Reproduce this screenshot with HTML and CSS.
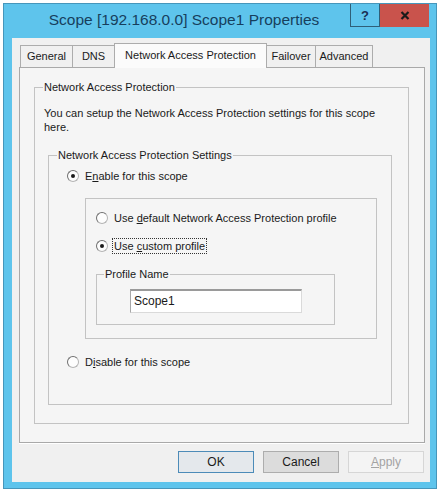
FILE: index.html
```html
<!DOCTYPE html>
<html>
<head>
<meta http-equiv="Content-Type" content="text/html; charset=utf-8"/>
<title>Scope Properties</title>
<link rel="stylesheet" href="styles.css">
</head>
<body>
<div class="window">
  <div class="titlebar">
    <div class="title">Scope [192.168.0.0] Scope1 Properties</div>
    <div class="caption-btn help">?</div>
    <div class="caption-btn close">
      <svg width="10" height="9" viewBox="0 0 10 9"><path d="M1.5 1 L8.5 8 M8.5 1 L1.5 8" stroke="#1a1a1a" stroke-width="2.2"/></svg>
    </div>
  </div>

  <div class="client">
    <div class="tabs">
      <div class="tab tab-general">General</div>
      <div class="tab tab-dns">DNS</div>
      <div class="tab tab-nap selected">Network Access Protection</div>
      <div class="tab tab-failover">Failover</div>
      <div class="tab tab-advanced">Advanced</div>
    </div>

    <div class="panel">
      <fieldset class="group outer">
        <legend>Network Access Protection</legend>
        <p class="intro">You can setup the Network Access Protection settings for this scope<br>here.</p>

        <fieldset class="group settings">
          <legend>Network Access Protection Settings</legend>
          <div class="radio-row first">
            <span class="radio checked"></span>
            <span class="label">E<u>n</u>able for this scope</span>
          </div>

          <div class="box">
            <div class="radio-row">
              <span class="radio"></span>
              <span class="label">Use <u>d</u>efault Network Access Protection profile</span>
            </div>
            <div class="radio-row second">
              <span class="radio checked"></span>
              <span class="label focused">Use <u>c</u>ustom profile</span>
            </div>
            <fieldset class="group profile">
              <legend>Profile Name</legend>
              <div class="textbox">Scope1</div>
            </fieldset>
          </div>

          <div class="radio-row last">
            <span class="radio"></span>
            <span class="label">D<u>i</u>sable for this scope</span>
          </div>
        </fieldset>
      </fieldset>
    </div>

    <div class="buttons">
      <div class="btn default">OK</div>
      <div class="btn">Cancel</div>
      <div class="btn disabled"><u>A</u>pply</div>
    </div>
  </div>
</div>
</body>
</html>
```

FILE: styles.css
```css
body {
  margin: 0;
  background-color: white;
  font-family: "Liberation Sans", Arial, sans-serif;
  font-size: 11px;
  color: #1a1a1a;
}

.window {
  margin: 3px 0 0 3px;
  width: 434px;
  height: 486px;
  box-sizing: border-box;
  border: 1px solid #4696bb;
  background-color: #5ec4ec;
  padding: 0 6px 6px 8px;
}

/* title bar */

.titlebar {
  height: 34px;
  display: flex;
  align-items: flex-start;
}

.title {
  flex: 1;
  padding: 7px 0 0 6px;
  text-align: center;
  font-size: 15.5px;
  color: #173f5d;
}

.caption-btn {
  height: 23px;
  display: flex;
  align-items: center;
  justify-content: center;
  box-sizing: border-box;
}

.help {
  width: 30px;
  border: 1px solid #2f5f78;
  border-top: none;
  font-weight: bold;
  font-size: 13px;
  color: #1b2f52;
}

.close {
  width: 49px;
  margin-right: 1px;
  background-color: #c9534c;
}

/* client area */

.client {
  background-color: #f0f0f0;
  height: 444px;
  box-sizing: border-box;
  padding: 5px 5px 8px 7px;
}

.tabs {
  display: flex;
  align-items: flex-end;
  padding-left: 1px;
  height: 24px;
}

.tab {
  height: 22px;
  box-sizing: border-box;
  border: 1px solid #acacac;
  border-bottom: none;
  margin-right: -1px;
  background-color: #f0f0f0;
  text-align: center;
  line-height: 21px;
  white-space: nowrap;
}

.tab.selected {
  position: relative;
  z-index: 1;
  height: 25px;
  margin-bottom: -1px;
  background-color: #fbfbfb;
  line-height: 22px;
}

.tab-general { width: 53px; }
.tab-dns { width: 43px; }
.tab-nap { width: 153px; }
.tab-failover { width: 50px; }
.tab-advanced { width: 58px; }

.panel {
  border: 1px solid #a9a9a9;
  background-color: #f5f5f5;
  padding: 12px 15px 18px 14px;
  box-shadow: 0 1px 0 #fff;
}

/* group boxes */

.group {
  margin: 0;
  border: 1px solid #c3c3c3;
  min-width: 0;
}

.group legend {
  padding: 0 1px;
  line-height: 14px;
}

.outer {
  padding: 0 9px 18px 9px;
}

.outer legend {
  margin-left: -1px;
}

.intro {
  margin: 12px 0 0 0;
  line-height: 14px;
}

.settings {
  margin: 14px 7px 0 4px;
  padding: 0 14px 34px 18px;
}

.settings legend {
  margin-left: -10px;
}

.box {
  margin: 14px 0 0 18px;
  border: 1px solid #c3c3c3;
  padding: 11px 10px 13px 10px;
}

.profile {
  width: 239px;
  box-sizing: border-box;
  margin-top: 13px;
  padding: 0 0 11px 33px;
}

.profile legend {
  margin-left: -26px;
}

.textbox {
  margin-top: 8px;
  width: 172px;
  height: 24px;
  box-sizing: border-box;
  background-color: white;
  border: 1px solid #dadada;
  border-top: 2px solid #9a9a9a;
  border-left-color: #a8a8a8;
  padding: 3px 0 0 3px;
  font-size: 12px;
}

/* radio buttons */

.radio-row {
  display: flex;
  align-items: center;
  height: 16px;
}

.radio-row.first {
  margin-top: 6px;
}

.radio-row.second {
  margin-top: 12px;
}

.radio-row.last {
  margin-top: 15px;
}

.radio {
  width: 12px;
  height: 12px;
  box-sizing: border-box;
  border-radius: 50%;
  border: 1px solid #b4b4b4;
  border-top-color: #6f6f6f;
  border-left-color: #6f6f6f;
  background-color: #fdfdfd;
  margin-right: 6px;
  display: flex;
  align-items: center;
  justify-content: center;
}

.radio.checked::after {
  content: "";
  width: 4px;
  height: 4px;
  border-radius: 50%;
  background-color: #1a1a1a;
}

.label {
  border: 1px solid transparent;
  padding: 0 1px;
  margin-left: -2px;
  line-height: 14px;
}

.label.focused {
  border: 1px dotted #333;
}

/* dialog buttons */

.buttons {
  display: flex;
  justify-content: flex-end;
  gap: 9px;
  margin-top: 8px;
  padding-right: 1px;
}

.btn {
  width: 76px;
  height: 22px;
  box-sizing: border-box;
  border: 1px solid #adadad;
  background-color: #dcdcdc;
  text-align: center;
  line-height: 20px;
  font-size: 12px;
}

.btn.default {
  border-color: #4c8bb8;
  background-color: #e4e8ec;
}

.btn.disabled {
  border-color: #d6d6d6;
  background-color: #f4f4f4;
  color: #a3a3a3;
}
```
